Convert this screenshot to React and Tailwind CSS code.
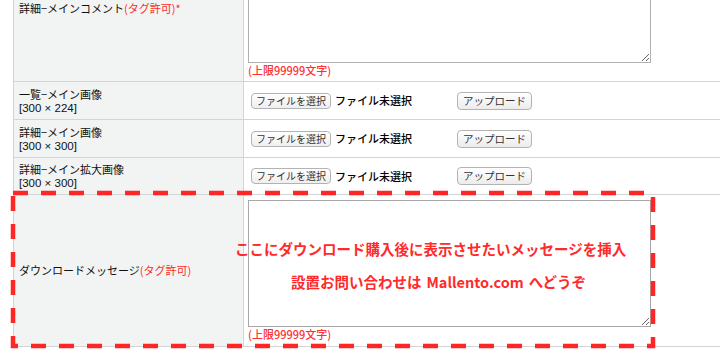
import React from 'react';

const rows = [
  { label: '一覧−メイン画像', size: '[300 × 224]', h: 'h-[38px]' },
  { label: '詳細−メイン画像', size: '[300 × 300]', h: 'h-[38px]' },
  { label: '詳細−メイン拡大画像', size: '[300 × 300]', h: 'h-[37px]' },
];

const FileRow = ({ label, size, h }) => (
  <div className={`flex ${h} border-b border-[#d4d4d4]`}>
    <div className="w-[231px] shrink-0 flex flex-col justify-center bg-[#f2f3f3] border-x border-[#d4d4d4] px-[5px] text-[11px] text-[#111]">
      <span className="leading-[15px]">{label}</span>
      <span className="leading-[13px] text-[11.5px] font-['Liberation_Sans',sans-serif]">{size}</span>
    </div>
    <div className="flex-1 flex items-center pl-[7px]">
      <div className="w-[206px] flex items-center">
        <button className="w-[80px] h-[16px] rounded-[4px] border border-[#b3b3b3] bg-gradient-to-b from-white to-[#efefef] text-[10px] leading-[14px] text-[#333]">
          ファイルを選択
        </button>
        <span className="ml-[4px] text-[11px] font-medium text-black">ファイル未選択</span>
      </div>
      <button className="w-[75px] h-[18px] rounded-[4px] border border-[#b3b3b3] bg-gradient-to-b from-white to-[#ececec] text-[10.5px] leading-[16px] text-[#333]">
        アップロード
      </button>
    </div>
  </div>
);

const Note = () => (
  <div className="text-[11px] leading-[14px] font-medium text-[#ff3030]">(上限99999文字)</div>
);

export default function App() {
  return (
    <div className="relative w-[720px] h-[360px] overflow-hidden bg-white font-['Noto_Sans_CJK_JP',sans-serif]">
      <div className="-mt-[66px] pl-[13px]">
        {/* 詳細コメント */}
        <div className="flex h-[148px] border-b border-[#d4d4d4]">
          <div className="w-[231px] shrink-0 flex items-center bg-[#f2f3f3] border-x border-[#d4d4d4] px-[5px] pt-[2px] text-[11px] text-[#111]">
            詳細−メインコメント<span className="text-[#ff2a2a]">(タグ許可)*</span>
          </div>
          <div className="flex-1 pl-[4px] pt-[6px]">
            <textarea readOnly className="block w-[403px] h-[123px] border border-[#b0b0b0] bg-white" />
            <Note />
          </div>
        </div>

        {rows.map((r) => (
          <FileRow key={r.label} {...r} />
        ))}

        {/* ダウンロードメッセージ */}
        <div className="flex h-[152px] border-b border-[#d4d4d4]">
          <div className="w-[231px] shrink-0 flex items-center bg-[#f2f3f3] border-x border-[#d4d4d4] px-[5px] text-[11px] text-[#111]">
            ダウンロードメッセージ<span className="text-[#ff2a2a]">(タグ許可)</span>
          </div>
          <div className="flex-1 pl-[4px] pt-[5px]">
            <textarea readOnly className="block w-[403px] h-[127px] border border-[#a8a8a8] bg-white" />
            <Note />
          </div>
        </div>
      </div>

      {/* annotation overlay */}
      <svg className="absolute left-0 top-0 pointer-events-none" width="720" height="360">
        <rect x="13" y="193" width="640" height="153" fill="none" stroke="#ff2626" strokeWidth="4.5" strokeDasharray="15 13" />
      </svg>
      <div className="absolute left-[235px] top-[241px] text-[14.5px] leading-[16px] font-bold text-[#ff2a2a] whitespace-nowrap">
        ここにダウンロード購入後に表示させたいメッセージを挿入
      </div>
      <div className="absolute left-[291px] top-[274px] text-[14.5px] leading-[16px] font-bold text-[#ff2a2a] whitespace-nowrap">
        設置お問い合わせは<span className="mx-[5px]">Mallento.com</span>へどうぞ
      </div>
    </div>
  );
}
